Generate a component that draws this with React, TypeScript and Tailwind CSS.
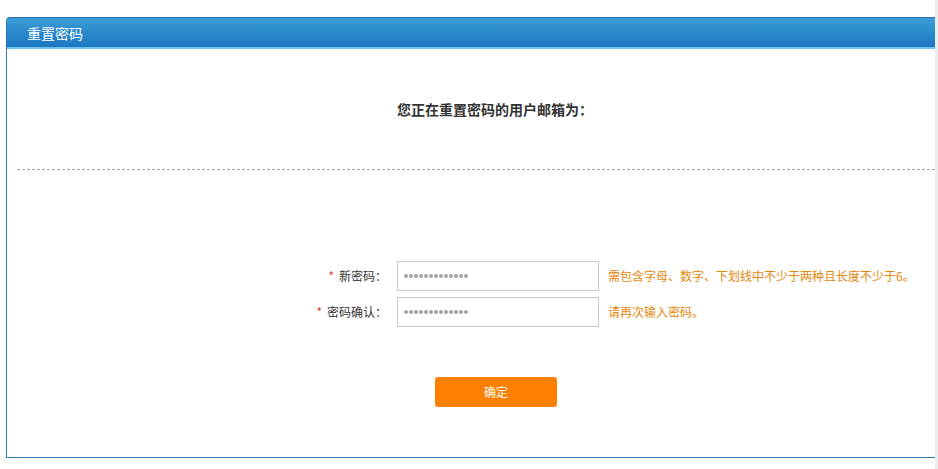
import React from "react";

const font = { fontFamily: '"Noto Sans CJK SC", "Liberation Sans", sans-serif' };

const dots = Array.from({ length: 13 });

function Row({ label, hint, top }: { label: string; hint: string; top?: boolean }) {
  return (
    <div className={`flex items-center ${top ? "" : "mt-[6px]"}`}>
      <div className="w-[380px] text-right text-[12px] text-[#333] leading-[30px]">
        <span className="text-[#e4393c] mr-[5px]">*</span>
        {label}
      </div>
      <div className="ml-[10px] w-[202px] h-[30px] border border-[#c9c9c9] bg-white flex items-center pl-[6px] gap-[1px]">
        {dots.map((_, i) => (
          <span key={i} className="w-[4px] h-[4px] rounded-full bg-[#a3a3a3]" />
        ))}
      </div>
      <div className="ml-[9px] text-[12px] text-[#e5870c]">{hint}</div>
    </div>
  );
}

export default function App() {
  return (
    <div className="w-[938px] h-[469px] bg-white relative flex overflow-hidden" style={font}>
      <div className="ml-[6px] mt-[17px] w-[929px] h-[441px] border-l border-b border-[#2d78ad] rounded-tl-[4px] flex flex-col">
        <div className="h-[32px] rounded-tl-[3px] border-t border-[#2a6ea3] bg-gradient-to-b from-[#3b9dd8] to-[#1b76c0] border-b-[2px] border-b-[#6cc3f2] flex items-center pl-[20px]">
          <span className="text-white text-[14px] leading-none">重置密码</span>
        </div>
        <div className="flex justify-center pl-[48px] pt-[50px]">
          <span className="text-[14px] font-bold text-[#333] leading-[20px]">您正在重置密码的用户邮箱为：</span>
        </div>
        <div className="ml-[10px] mt-[50px] border-t border-dashed border-[#a8a8a8]" />
        <div className="mt-[91px]">
          <Row label="新密码：" hint="需包含字母、数字、下划线中不少于两种且长度不少于6。" top />
          <Row label="密码确认：" hint="请再次输入密码。" />
        </div>
        <div className="mt-[50px] ml-[428px]">
          <button className="w-[122px] h-[30px] rounded-[3px] bg-[#ff8000] text-white text-[12px]">确定</button>
        </div>
      </div>
      <div className="absolute right-0 top-0 w-[3px] h-full bg-[#ececec]" />
    </div>
  );
}
